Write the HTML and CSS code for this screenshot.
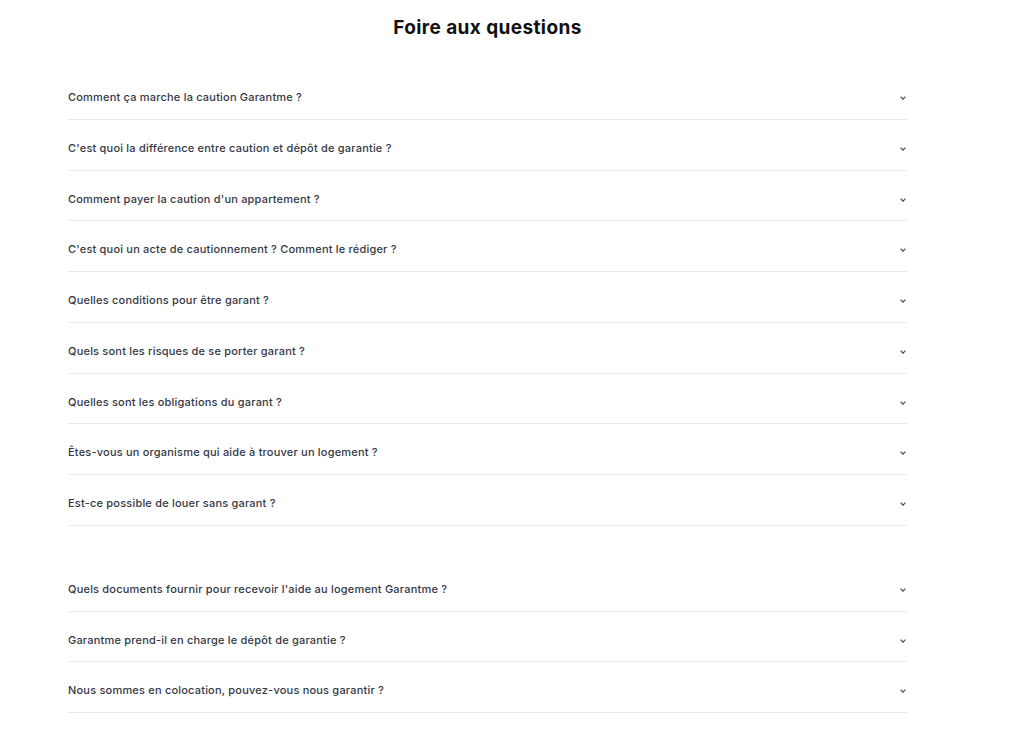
FILE: index.html
```html
<!DOCTYPE html>
<html lang="fr">

<head>
    <meta charset="UTF-8">
    <meta name="viewport" content="width=device-width, initial-scale=1.0">
    <title>Foire aux questions</title>
    <link rel="stylesheet" href="styles.css">
</head>

<body>
    <main class="faq">
        <h1 class="faq-title">Foire aux questions</h1>

        <ul class="faq-list">
            <li class="faq-item"><span>Comment ça marche la caution Garantme ?</span><svg class="chevron" viewBox="0 0 6 4"><polyline points="0.6,0.6 3,3.2 5.4,0.6"/></svg></li>
            <li class="faq-item"><span>C'est quoi la différence entre caution et dépôt de garantie ?</span><svg class="chevron" viewBox="0 0 6 4"><polyline points="0.6,0.6 3,3.2 5.4,0.6"/></svg></li>
            <li class="faq-item"><span>Comment payer la caution d'un appartement ?</span><svg class="chevron" viewBox="0 0 6 4"><polyline points="0.6,0.6 3,3.2 5.4,0.6"/></svg></li>
            <li class="faq-item"><span>C'est quoi un acte de cautionnement ? Comment le rédiger ?</span><svg class="chevron" viewBox="0 0 6 4"><polyline points="0.6,0.6 3,3.2 5.4,0.6"/></svg></li>
            <li class="faq-item"><span>Quelles conditions pour être garant ?</span><svg class="chevron" viewBox="0 0 6 4"><polyline points="0.6,0.6 3,3.2 5.4,0.6"/></svg></li>
            <li class="faq-item"><span>Quels sont les risques de se porter garant ?</span><svg class="chevron" viewBox="0 0 6 4"><polyline points="0.6,0.6 3,3.2 5.4,0.6"/></svg></li>
            <li class="faq-item"><span>Quelles sont les obligations du garant ?</span><svg class="chevron" viewBox="0 0 6 4"><polyline points="0.6,0.6 3,3.2 5.4,0.6"/></svg></li>
            <li class="faq-item"><span>Êtes-vous un organisme qui aide à trouver un logement ?</span><svg class="chevron" viewBox="0 0 6 4"><polyline points="0.6,0.6 3,3.2 5.4,0.6"/></svg></li>
            <li class="faq-item"><span>Est-ce possible de louer sans garant ?</span><svg class="chevron" viewBox="0 0 6 4"><polyline points="0.6,0.6 3,3.2 5.4,0.6"/></svg></li>
        </ul>

        <ul class="faq-list faq-list-second">
            <li class="faq-item"><span>Quels documents fournir pour recevoir l'aide au logement Garantme ?</span><svg class="chevron" viewBox="0 0 6 4"><polyline points="0.6,0.6 3,3.2 5.4,0.6"/></svg></li>
            <li class="faq-item"><span>Garantme prend-il en charge le dépôt de garantie ?</span><svg class="chevron" viewBox="0 0 6 4"><polyline points="0.6,0.6 3,3.2 5.4,0.6"/></svg></li>
            <li class="faq-item"><span>Nous sommes en colocation, pouvez-vous nous garantir ?</span><svg class="chevron" viewBox="0 0 6 4"><polyline points="0.6,0.6 3,3.2 5.4,0.6"/></svg></li>
        </ul>
    </main>
</body>

</html>
```

FILE: styles.css
```css
body {
    margin: 0;
    background: #ffffff;
    font-family: Inter, "Liberation Sans", Arial, sans-serif;
    color: #343845;
}

.faq {
    width: 839px;
    margin-left: 68px;
    padding-top: 17px;
}

.faq-title {
    margin: 0 0 30px;
    font-size: 19px;
    line-height: 22px;
    font-weight: 700;
    letter-spacing: 0.4px;
    text-align: center;
    color: #111111;
}

.faq-list {
    list-style: none;
    margin: 0;
    padding: 0;
}

.faq-list-second {
    margin-top: 35px;
}

.faq-item {
    display: flex;
    justify-content: space-between;
    align-items: flex-start;
    box-sizing: border-box;
    height: 50.75px;
    padding: 21px 1px 0 0;
    border-bottom: 1px solid #e9e9ec;
    font-size: 11px;
    line-height: 14px;
    font-weight: 500;
    letter-spacing: 0.2px;
    cursor: pointer;
}

.chevron {
    width: 6px;
    height: 4px;
    margin-top: 6px;
    fill: none;
    stroke: #4a4f5e;
    stroke-width: 1.2;
}
```
